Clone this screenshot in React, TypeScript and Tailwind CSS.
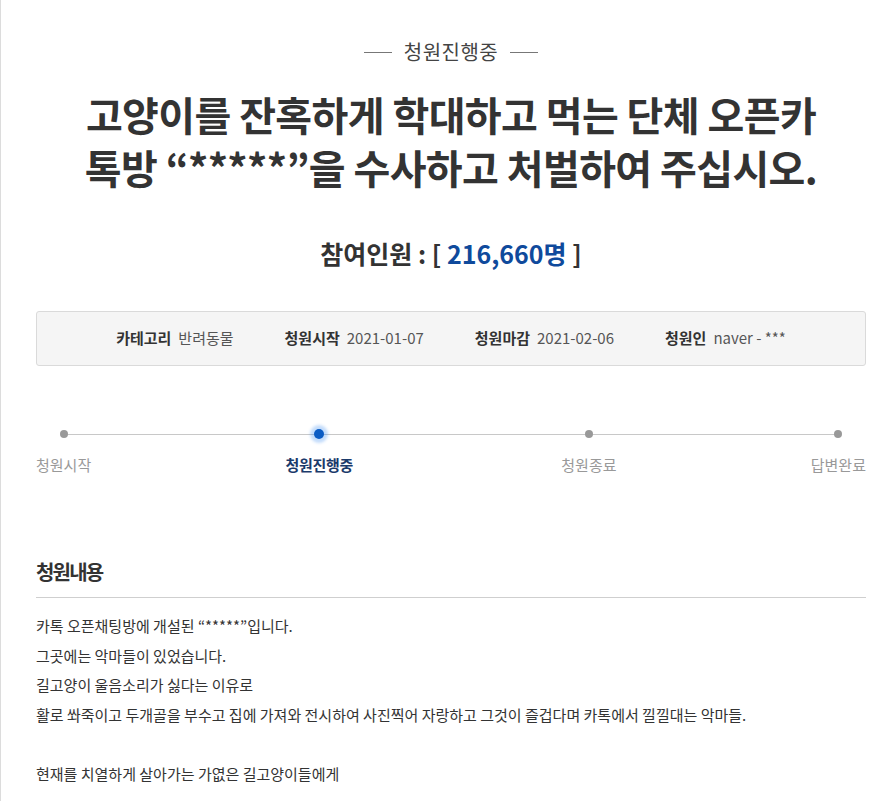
import React from 'react';

const steps = [
  { label: '청원시작', active: false },
  { label: '청원진행중', active: true },
  { label: '청원종료', active: false },
  { label: '답변완료', active: false },
];

const body = [
  '카톡 오픈채팅방에 개설된 “*****”입니다.',
  '그곳에는 악마들이 있었습니다.',
  '길고양이 울음소리가 싫다는 이유로',
  '활로 쏴죽이고 두개골을 부수고 집에 가져와 전시하여 사진찍어 자랑하고 그것이 즐겁다며 카톡에서 낄낄대는 악마들.',
  '',
  '현재를 치열하게 살아가는 가엾은 길고양이들에게',
];

export default function App() {
  return (
    <div className="min-h-screen bg-white border-l border-[#dcdcdc] pt-[40px] pl-[35px] pr-[17px] font-['Noto_Sans_CJK_KR','Noto_Sans',sans-serif] text-[#333]">
      {/* status tag */}
      <div className="flex items-center justify-center gap-[12px]">
        <span className="w-[28px] h-px bg-[#777]" />
        <span className="text-[20px] leading-[24px] tracking-[0.5px] text-[#444]">청원진행중</span>
        <span className="w-[28px] h-px bg-[#777]" />
      </div>

      {/* title */}
      <h1 className="mt-[24px] text-center text-[40px] leading-[53px] font-bold tracking-[-0.6px] text-[#333]">
        고양이를 잔혹하게 학대하고 먹는 단체 오픈카
        <br />
        톡방 “*****”을 수사하고 처벌하여 주십시오.
      </h1>

      {/* count */}
      <div className="mt-[44px] text-center text-[25px] leading-[30px] font-bold text-[#333]">
        참여인원 : [ <span className="text-[#0f4a9c]">216,660명</span> ]
      </div>

      {/* info box */}
      <div className="mt-[43px] h-[55px] bg-[#f5f5f5] border border-[#dadada] rounded-[3px] flex items-center justify-center gap-[51px] text-[15px]">
        <div className="flex items-center gap-[7px]">
          <span className="font-bold text-[#333]">카테고리</span>
          <span className="text-[#555]">반려동물</span>
        </div>
        <div className="flex items-center gap-[7px]">
          <span className="font-bold text-[#333]">청원시작</span>
          <span className="text-[#555]">2021-01-07</span>
        </div>
        <div className="flex items-center gap-[7px]">
          <span className="font-bold text-[#333]">청원마감</span>
          <span className="text-[#555]">2021-02-06</span>
        </div>
        <div className="flex items-center gap-[7px]">
          <span className="font-bold text-[#333]">청원인</span>
          <span className="text-[#555]">naver - ***</span>
        </div>
      </div>

      {/* progress */}
      <div className="relative mt-[58px]">
        <div className="absolute left-[27px] right-[28px] top-[9.5px] h-px bg-[#c8c8c8]" />
        <div className="relative flex justify-between">
          {steps.map((s) => (
            <div key={s.label} className={s.active ? 'flex flex-col items-center mr-[14px]' : 'flex flex-col items-center'}>
              <div className="h-[20px] flex items-center justify-center">
                {s.active ? (
                  <span className="w-[10px] h-[10px] rounded-full bg-[#0b5cc4] shadow-[0_0_3px_4px_rgba(40,130,240,0.28)]" />
                ) : (
                  <span className="w-[8px] h-[8px] rounded-full bg-[#999]" />
                )}
              </div>
              <span
                className={
                  s.active
                    ? 'mt-[11px] text-[15px] leading-[20px] tracking-[-0.3px] font-bold text-[#1b3a6b]'
                    : 'mt-[11px] text-[15px] leading-[20px] text-[#999]'
                }
              >
                {s.label}
              </span>
            </div>
          ))}
        </div>
      </div>

      {/* content */}
      <h2 className="mt-[83px] pb-[11px] border-b border-[#cfcfcf] text-[20px] leading-[28px] font-bold tracking-[-1.8px] text-[#333]">
        청원내용
      </h2>
      <div className="mt-[13px] text-[15px] leading-[29.5px] text-[#333]">
        {body.map((line, i) => (
          <p key={i} className="h-[29.5px]">
            {line}
          </p>
        ))}
      </div>
    </div>
  );
}
